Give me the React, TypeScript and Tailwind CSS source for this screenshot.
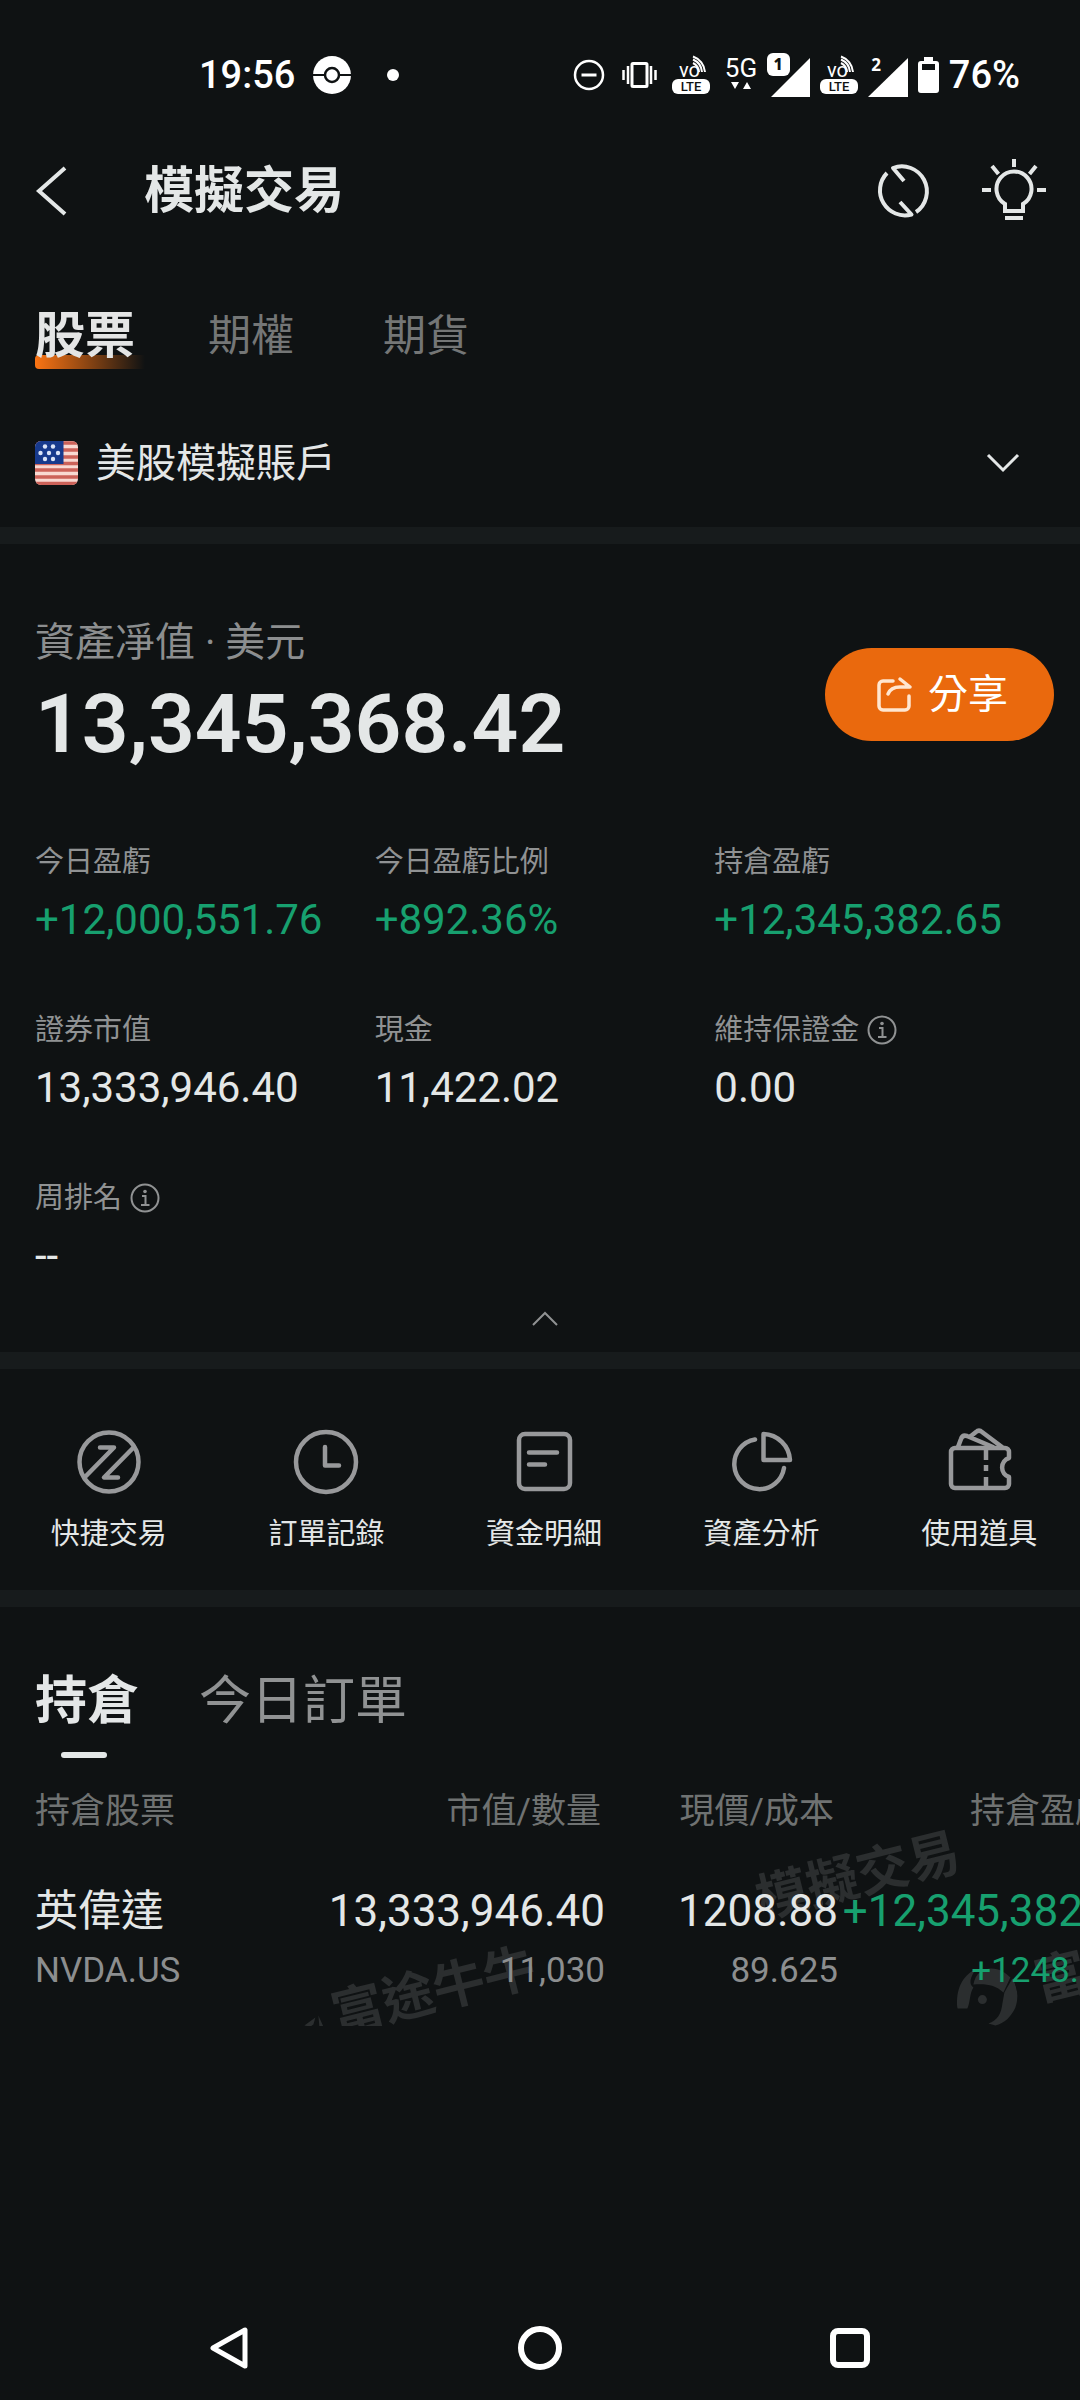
import React from 'react';

interface Stat {
  label: string;
  value: string;
  up?: boolean;
  info?: boolean;
}

const stats: Stat[] = [
  { label: '今日盈虧', value: '+12,000,551.76', up: true },
  { label: '今日盈虧比例', value: '+892.36%', up: true },
  { label: '持倉盈虧', value: '+12,345,382.65', up: true },
  { label: '證券市值', value: '13,333,946.40' },
  { label: '現金', value: '11,422.02' },
  { label: '維持保證金', value: '0.00', info: true },
  { label: '周排名', value: '--', info: true },
];

const VoLte = () => (
  <svg width="38" height="40" viewBox="0 0 38 40" fill="none">
    <text x="7" y="22" fontSize="20" fill="#fff" fontFamily="Roboto, sans-serif">vo</text>
    <path d="M21 8a11 11 0 0 1 6 9M21 4.500a15 15 0 0 1 9 12.500M21 1.500a18 18 0 0 1 12 15.500" stroke="#fff" strokeWidth="2" />
    <rect y="24" width="38" height="15" rx="6" fill="#fff" />
    <text x="19" y="36" fontSize="13" fill="#0f1213" textAnchor="middle" fontFamily="Roboto, sans-serif" fontWeight="500">LTE</text>
  </svg>
);

const StatusBar = () => (
  <div className="flex justify-between pt-[50px] pb-[30px] pl-[199px] pr-[60px] text-white">
    <div className="flex h-[50px] items-center">
      <span className="text-[38px] leading-[50px] font-medium">19:56</span>
      <svg className="ml-[18px]" width="38" height="38" viewBox="0 0 38 38">
        <circle cx="19" cy="19" r="19" fill="#fff" />
        <path d="M0 19h38" stroke="#0f1213" strokeWidth="2" />
        <circle cx="19" cy="19" r="7" fill="#fff" stroke="#0f1213" strokeWidth="2.500" />
      </svg>
      <span className="ml-9 size-3 rounded-full bg-white" />
    </div>
    <div className="flex h-[50px] items-center gap-[10px]">
      <svg width="36" height="32" viewBox="0 0 36 32" fill="none" stroke="#fff" strokeWidth="2.500">
        <circle cx="16" cy="16" r="14" />
        <path d="M8.500 16h15" strokeWidth="3" />
      </svg>
      <svg width="43" height="30" viewBox="0 0 43 30" fill="none" stroke="#fff" strokeWidth="2.500">
        <rect x="13" y="3.500" width="15" height="23" rx="1" strokeWidth="3" />
        <path d="M9 6v18M4.500 10v10M32 6v18M36.500 10v10" />
      </svg>
      <VoLte />
      <svg width="37" height="40" viewBox="0 0 37 40" fill="#fff">
        <text x="21" y="22" fontSize="26" textAnchor="middle" fontFamily="Roboto, sans-serif">5G</text>
        <path d="M11 27h8l-4 7zM23 34h8l-4-7z" />
      </svg>
      <svg width="43" height="44" viewBox="0 0 43 44">
        <path d="M43 5v39H4z" fill="#fff" />
        <rect width="25" height="25" rx="7" fill="#0f1213" />
        <rect width="23" height="23" rx="6" fill="#fff" />
        <text x="11" y="17" fontSize="16" fill="#0f1213" textAnchor="middle" fontFamily="'Noto Sans', sans-serif" fontWeight="800">1</text>
      </svg>
      <VoLte />
      <svg width="40" height="44" viewBox="0 0 40 44" fill="#fff">
        <path d="M40 5v39H0z" />
        <text x="8" y="18" fontSize="17" textAnchor="middle" fontFamily="'Noto Sans', sans-serif" fontWeight="700">2</text>
      </svg>
      <svg width="21" height="36" viewBox="0 0 21 36">
        <path d="M6 0h9v4h3a3 3 0 0 1 3 3v26a3 3 0 0 1-3 3H3a3 3 0 0 1-3-3V7a3 3 0 0 1 3-3h3z" fill="#fff" />
        <path d="M4 7h13v6H4z" fill="#0f1213" />
      </svg>
      <span className="text-[38px] leading-[50px] font-medium">76%</span>
    </div>
  </div>
);

const Header = () => (
  <header className="flex h-[122px] items-center pr-[34px] pl-[34px]">
    <button type="button" aria-label="返回" className="w-[110px]">
      <svg width="34" height="52" viewBox="0 0 34 52" fill="none" stroke="#e4e7e7" strokeWidth="4">
        <path d="M31 3L5 26l26 23" />
      </svg>
    </button>
    <h1 className="text-[50px] leading-[60px] font-bold">模擬交易</h1>
    <button type="button" aria-label="切換" className="ml-auto">
      <svg width="64" height="66" viewBox="0 0 64 66" fill="none" stroke="#e4e7e7" strokeWidth="4">
        <path d="M34 23L23 10A25 25 0 0 1 46 54" strokeLinejoin="round" />
        <path d="M30 44l11.500 12.500A25 25 0 0 1 17 15" strokeLinejoin="round" />
      </svg>
    </button>
    <button type="button" aria-label="提示" className="ml-12">
      <svg width="64" height="66" viewBox="0 0 64 66" fill="none" stroke="#e4e7e7" strokeWidth="4">
        <path d="M23 53v-7a17.500 17.500 0 1 1 18 0v7zM23 60h18" />
        <path d="M32 1v8M0 32h9M55 32h9M10 8l6.500 8M54 8l-6.500 8" />
      </svg>
    </button>
  </header>
);

const MarketTabs = () => (
  <nav className="flex gap-[73px] pt-[51px] pl-[35px] text-[43px] leading-[66px] text-[#747676]">
    <button type="button" className="relative text-[50px] font-bold text-[#e4e5e5]">
      <span className="absolute bottom-0 left-0 h-[14px] w-[110px] rounded-l-sm bg-linear-to-r from-[#fb7413] to-transparent" />
      <span className="relative">股票</span>
    </button>
    <button type="button" className="pr-4">期權</button>
    <button type="button">期貨</button>
  </nav>
);

const UsFlag = () => (
  <svg width="43" height="44" viewBox="0 0 43 44" className="overflow-hidden rounded-md">
    <path d="M0 0h43v44H0z" fill="#f9d9d2" />
    <path d="M0 2h43M0 9h43M0 16h43M0 22.500h43M0 29h43M0 36h43M0 42.500h43" stroke="#cc6259" strokeWidth="3.500" />
    <path d="M0 0h28.500v23H0z" fill="#173a8d" />
    <g fill="#dbe4f7">
      <circle cx="10" cy="5.500" r="2.200" />
      <circle cx="18" cy="5.500" r="2.200" />
      <circle cx="5.500" cy="12" r="2.200" />
      <circle cx="14" cy="12" r="2.200" />
      <circle cx="23" cy="12" r="2.200" />
      <circle cx="10" cy="18" r="2.200" />
      <circle cx="18" cy="18" r="2.200" />
    </g>
  </svg>
);

const AccountSelect = () => (
  <div className="flex h-[96px] items-center pr-[60px] pl-[35px]">
    <UsFlag />
    <select
      aria-label="賬戶"
      className="ml-[18px] h-full flex-1 appearance-none bg-transparent pt-[2px] text-[40px] text-[#e4e7e7]"
    >
      <option>美股模擬賬戶</option>
    </select>
    <svg width="34" height="20" viewBox="0 0 34 20" fill="none" stroke="#e4e7e7" strokeWidth="3">
      <path d="M2 2l15 15L32 2" />
    </svg>
  </div>
);

const Divider = () => <div className="h-[17px] bg-[#171b1c]" />;

const InfoIcon = () => (
  <svg width="30" height="30" viewBox="0 0 30 30" fill="none" stroke="#909293" strokeWidth="2">
    <circle cx="15" cy="15" r="13.500" />
    <path d="M12 13h3.500v9M11 22h8.500" />
    <circle cx="15" cy="8.500" r="1.800" fill="#909293" stroke="none" />
  </svg>
);

const Summary = () => (
  <section className="pt-[69px] pr-[26px] pl-[35px]">
    <div className="flex items-center justify-between">
      <div>
        <p className="text-[40px] leading-[60px] text-[#8c8e8f]">資產凈值 · 美元</p>
        <p className="text-[82px] leading-[102px] font-semibold">13,345,368.42</p>
      </div>
      <button
        type="button"
        className="flex h-[93px] items-center gap-4 rounded-full bg-[#ea690d] pt-[2px] pr-[46px] pl-[51px] text-[40px] text-white"
      >
        <svg width="36" height="38" viewBox="0 0 36 38" fill="none" stroke="#ffe6d0" strokeWidth="3.500" strokeLinecap="round" strokeLinejoin="round">
          <path d="M17 5H7a4 4 0 0 0-4 4v21a4 4 0 0 0 4 4h22a4 4 0 0 0 4-4V20" />
          <path d="M12 18c2-5 7-7 12-7h10l-10-8" />
        </svg>
        分享
      </button>
    </div>
    <dl className="mt-[58px] grid grid-cols-3 gap-y-[52px]">
      {stats.map((stat) => (
        <div key={stat.label}>
          <dt className="flex items-center gap-2 text-[29px] leading-[58px] text-[#909293]">
            {stat.label}
            {stat.info && <InfoIcon />}
          </dt>
          <dd className={stat.up ? 'text-[42px] leading-[58px] text-[#17a06f]' : 'text-[42px] leading-[58px]'}>
            {stat.value}
          </dd>
        </div>
      ))}
    </dl>
    <button type="button" aria-label="收起" className="flex h-[67px] w-full items-center justify-center">
      <svg width="26" height="16" viewBox="0 0 26 16" fill="none" stroke="#909293" strokeWidth="2">
        <path d="M1 14L13 2l12 12" />
      </svg>
    </button>
  </section>
);

const actions = [
  {
    label: '快捷交易',
    icon: (
      <>
        <circle cx="32" cy="32" r="29.500" />
        <path d="M23 17.500h14L8 47M57 17L27 47.500h14" />
      </>
    ),
  },
  {
    label: '訂單記錄',
    icon: (
      <>
        <circle cx="32" cy="32" r="30" />
        <path d="M31 17v18.500h14" />
      </>
    ),
  },
  {
    label: '資金明細',
    icon: (
      <>
        <rect x="7" y="4" width="51" height="55" rx="6" />
        <path d="M17 22.500h28M17 34.500h16" />
      </>
    ),
  },
  {
    label: '資產分析',
    icon: (
      <>
        <path d="M33.500 4v26H60A27.500 27.500 0 0 0 33.500 4z" />
        <path d="M25 9.500A25 25 0 1 0 54 38" />
      </>
    ),
  },
  {
    label: '使用道具',
    icon: (
      <>
        <path d="M62 28V22a4 4 0 0 0-4-4H8a4 4 0 0 0-4 4v32a4 4 0 0 0 4 4h50a4 4 0 0 0 4-4v-7a10 10 0 0 1 0-19z" />
        <path d="M39 18v12M39 35v6M39 47v11" strokeLinecap="butt" />
        <path d="M11 17l3-8c1-3 3-4 6-3l26 11M24 6l5-4c2-2 4-2 6 0l20 15" />
      </>
    ),
  },
];

const QuickActions = () => (
  <div className="overflow-hidden">
    <div className="-mr-2 grid grid-cols-5 pt-[61px] pb-[34px]">
      {actions.map((action) => (
        <button key={action.label} type="button" className="flex flex-col items-center gap-[18px]">
          <svg
            width="64"
            height="64"
            viewBox="0 0 64 64"
            fill="none"
            stroke="#98999b"
            strokeWidth="4.500"
            strokeLinecap="round"
            strokeLinejoin="round"
            className="overflow-visible"
          >
            {action.icon}
          </svg>
          <span className="text-[29px] leading-[44px]">{action.label}</span>
        </button>
      ))}
    </div>
  </div>
);

const BullLogo = () => (
  <svg width="62" height="62" viewBox="0 0 62 62" fill="currentColor">
    <g transform="rotate(14 31 31)">
      <path d="M2 43C0 24 7 10 20 4c-5 8-7 14-2 18-4 6-3 15-6 21z" />
      <path d="M18 19C20 8 27 3 36 3c8 0 14 4 19 9l-7 15c-8-8-18-9-30-8z" />
      <path d="M57 13c6 10 6 20 3 29-4 9-11 16-20 18l-7-2c9-3 13-10 14-20l2-11z" />
      <circle cx="27" cy="34" r="4.500" />
    </g>
  </svg>
);

// only the tips of the horns show here
const BullLogoTips = () => (
  <svg width="62" height="62" viewBox="0 0 62 62" fill="currentColor" className="overflow-visible">
    <g transform="rotate(14 31 31)">
      <path d="M52 27l11-8-2 7-3 2zM66 17l5 11h-4z" />
    </g>
  </svg>
);

const Watermarks = () => (
  <div aria-hidden="true" className="text-[52px] leading-[62px] font-bold whitespace-nowrap text-[#2b2e2f]">
    <span className="absolute top-[69px] left-[754px] -rotate-14">模擬交易</span>
    <span className="absolute top-[194px] left-[249px] flex -rotate-14 gap-5">
      <BullLogoTips />
      富途牛牛
    </span>
    <span className="absolute top-[161px] left-[952px] flex -rotate-14 gap-5">
      <BullLogo />
      富途牛牛
    </span>
  </div>
);

const Holdings = () => (
  <section>
    <div className="flex gap-[60px] pt-[57px] pb-[19px] pl-[35px] text-[52px] leading-[76px]">
      <button type="button" className="flex flex-col items-start gap-[12px] font-bold">
        持倉
        <span className="ml-[26px] h-[6px] w-[46px] rounded-full bg-[#e4e7e7]" />
      </button>
      <button type="button" className="self-start text-[#909293]">今日訂單</button>
    </div>
    <div className="relative overflow-hidden">
      <Watermarks />
      <table className="relative w-[1144px] table-fixed text-right whitespace-nowrap">
        <colgroup>
          <col className="w-[250px]" />
          <col className="w-[355px]" />
          <col className="w-[233px]" />
          <col className="w-[306px]" />
        </colgroup>
        <thead className="text-[35px] leading-[70px] text-[#6f7272]">
          <tr>
            <th className="pl-[35px] text-left font-normal">持倉股票</th>
            <th className="pr-1 font-normal">市值/數量</th>
            <th className="pr-1 font-normal">現價/成本</th>
            <th className="pr-[34px] font-normal">持倉盈虧</th>
          </tr>
        </thead>
        <tbody>
          <tr className="text-[44px] leading-[60px]">
            <td className="pt-[34px] pb-[25px] pl-[35px] text-left">
              <div className="text-[43px]">英偉達</div>
              <div className="text-[35px] text-[#8c8e8f]">NVDA.US</div>
            </td>
            <td className="pt-[34px] pb-[25px]">
              <div>13,333,946.40</div>
              <div className="text-[35px] text-[#8c8e8f]">11,030</div>
            </td>
            <td className="pt-[34px] pb-[25px]">
              <div>1208.88</div>
              <div className="text-[35px] text-[#8c8e8f]">89.625</div>
            </td>
            <td className="pt-[34px] pb-[25px] text-[#17a06f]">
              <div>+12,345,382.65</div>
              <div className="text-[35px]">+1248.82%</div>
            </td>
          </tr>
        </tbody>
      </table>
    </div>
  </section>
);

const SystemNav = () => (
  <nav className="mt-auto grid h-[104px] grid-cols-3 place-items-center px-[75px]">
    <button type="button" aria-label="Back">
      <svg width="44" height="44" viewBox="0 0 44 44" fill="none" stroke="#fff" strokeWidth="5" strokeLinejoin="round">
        <path d="M37 4v36L5 22z" />
      </svg>
    </button>
    <button type="button" aria-label="Home" className="size-11 rounded-full border-[6px] border-white" />
    <button type="button" aria-label="Recents" className="size-10 rounded-lg border-[6px] border-white" />
  </nav>
);

export default function App() {
  return (
    <div className="flex min-h-screen flex-col overflow-hidden bg-[#0f1213] [font-family:Roboto,'Noto_Sans_CJK_TC',sans-serif] text-[#e4e7e7]">
      <StatusBar />
      <Header />
      <MarketTabs />
      <div className="pt-[46px] pb-4">
        <AccountSelect />
      </div>
      <Divider />
      <Summary />
      <Divider />
      <QuickActions />
      <Divider />
      <Holdings />
      <SystemNav />
    </div>
  );
}
